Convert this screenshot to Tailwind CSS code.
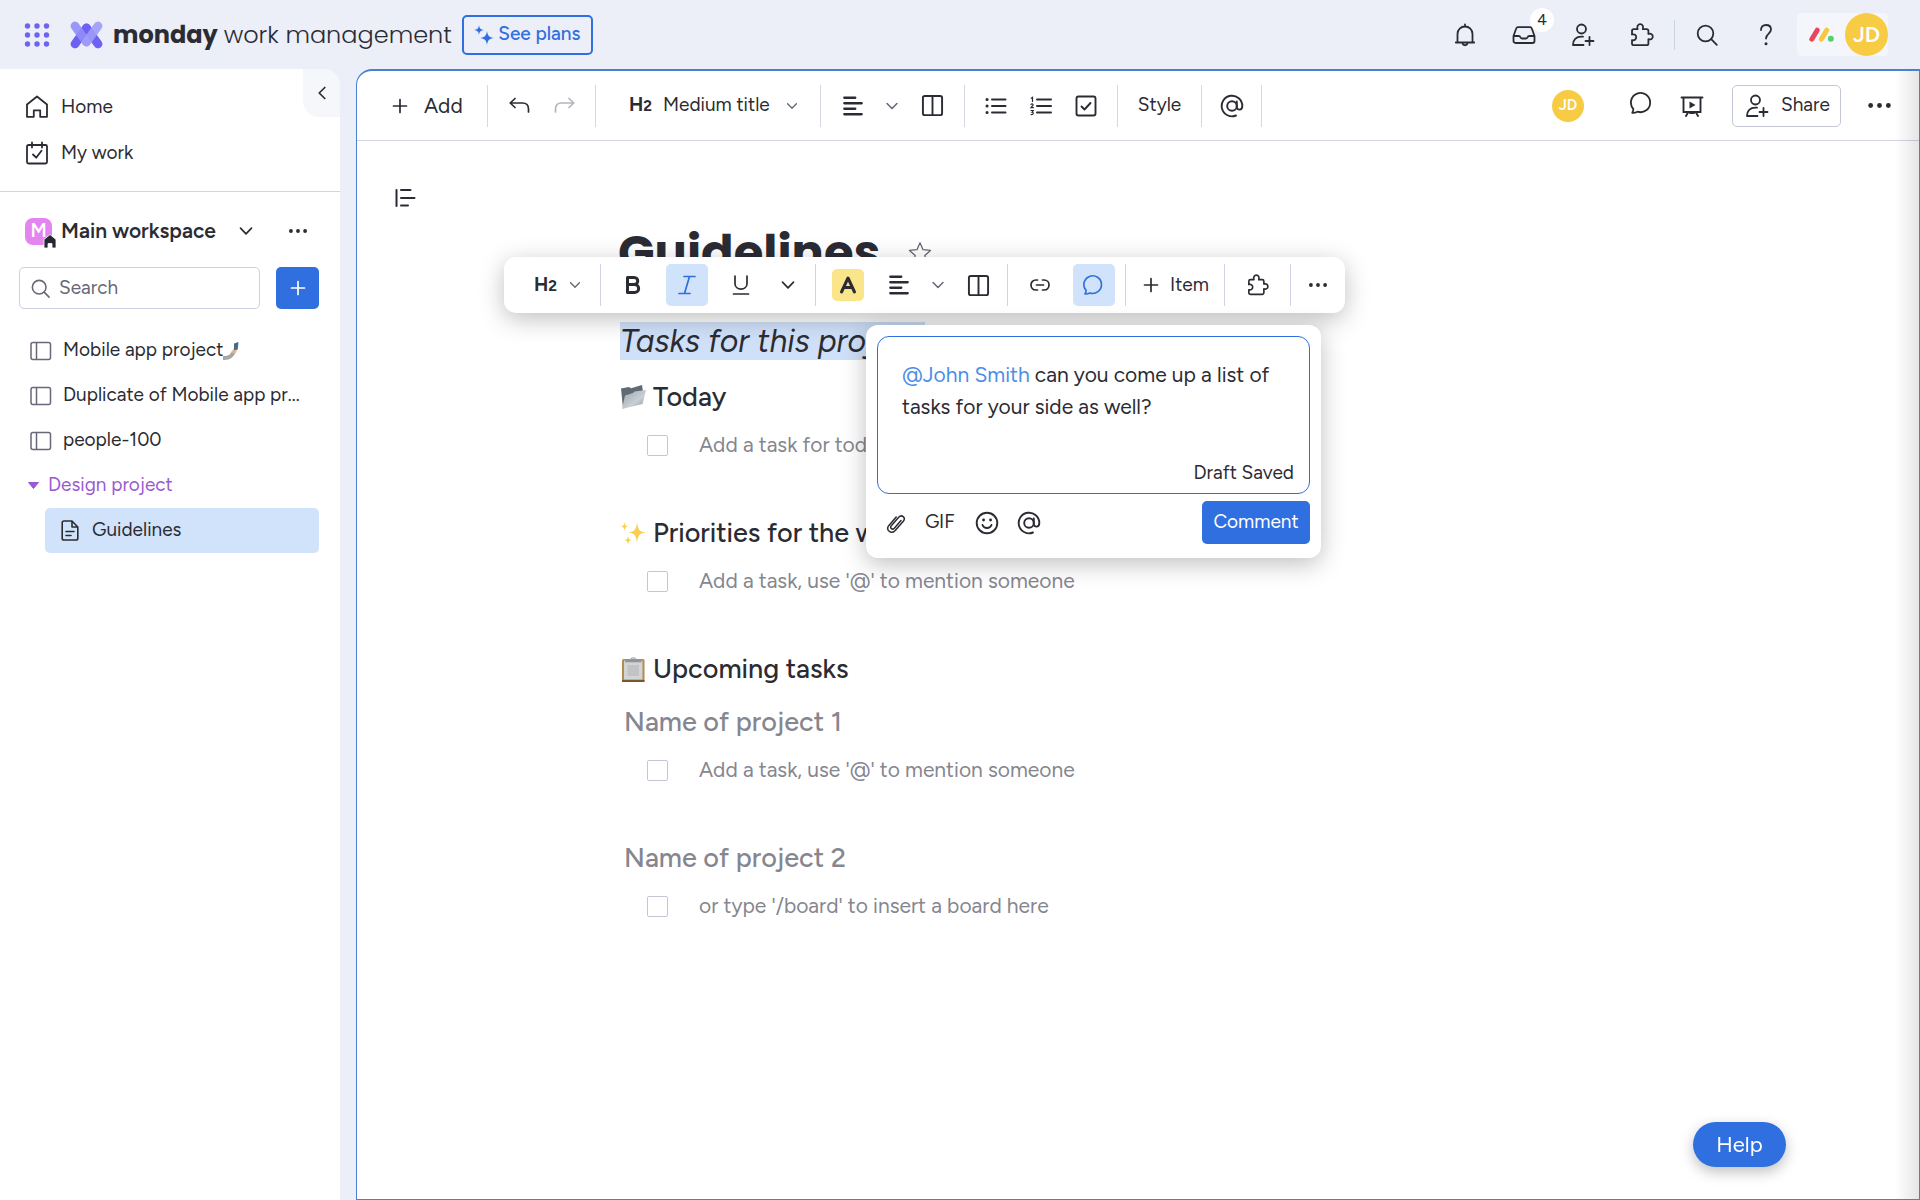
<!DOCTYPE html>
<html lang="en">
<head>
<meta charset="utf-8">
<meta name="viewport" content="width=device-width, initial-scale=1">
<title>Guidelines</title>
<script src="https://cdn.jsdelivr.net/npm/@tailwindcss/browser@4"></script>
</head>
<body class="flex min-h-screen flex-col bg-[#eceef8] font-[Figtree,Inter,sans-serif] text-[19px] text-[#2b2c33]">

<svg class="hidden" aria-hidden="true">
  <defs>
    <symbol id="plus" viewBox="0 0 20 20"><path d="M10 3.500v13M3.500 10h13" fill="none" stroke="currentColor" stroke-width="1.700" stroke-linecap="round"/></symbol>
    <symbol id="chevron" viewBox="0 0 20 20"><path d="M4.500 7.200 10 12.800l5.500-5.600" fill="none" stroke="currentColor" stroke-width="1.700" stroke-linecap="round" stroke-linejoin="round"/></symbol>
    <symbol id="dots" viewBox="0 0 24 24"><g fill="currentColor"><circle cx="3.500" cy="12" r="2.300"/><circle cx="12" cy="12" r="2.300"/><circle cx="20.500" cy="12" r="2.300"/></g></symbol>
    <symbol id="search" viewBox="0 0 24 24"><g fill="none" stroke="currentColor" stroke-width="1.800" stroke-linecap="round"><circle cx="10.500" cy="10.500" r="7.800"/><path d="m16.200 16.200 5.600 5.600"/></g></symbol>
    <symbol id="person" viewBox="0 0 24 24"><g fill="none" stroke="currentColor" stroke-width="1.800" stroke-linecap="round" stroke-linejoin="round"><circle cx="10.500" cy="6" r="4.500"/><path d="M12.500 22H2c0-5.500 3-8.300 8.500-8.300h1.500M18.500 14v8M14.500 18h8"/></g></symbol>
    <symbol id="puzzle" viewBox="0 0 24 24"><path d="M2 8C2 6.800 2.700 6.200 3.800 6.200H7.600C6.600 3.500 8 1.200 10.200 1.200s3.600 2.300 2.600 5h3.800c1.100 0 1.800.6 1.800 1.800v3c2.500-.9 4.400.5 4.400 2.600s-1.900 3.400-4.400 2.600v4.200c0 1.200-.7 1.800-1.800 1.800H3.800C2.700 22.200 2 21.600 2 20.400v-3.200c2.400.6 4.200-.8 4.200-2.900S4.400 10.800 2 11.500Z" fill="none" stroke="currentColor" stroke-width="1.800" stroke-linejoin="round"/></symbol>
    <symbol id="chat" viewBox="0 0 24 24"><path d="M2.200 21.800c.9-1.700 1.200-2.800 1.100-3.900A9.600 9.600 0 1 1 7.500 20.700c-1.700.9-3.300 1.200-5.300 1.100Z" fill="none" stroke="currentColor" stroke-width="1.800" stroke-linejoin="round"/></symbol>
    <symbol id="at" viewBox="0 0 24 24"><g fill="none" stroke="currentColor" stroke-width="1.900" stroke-linecap="round"><circle cx="12" cy="12" r="4.800"/><path d="M16.800 7.500V13c0 3.700 5.500 3.700 5.500-1A10.300 10.300 0 1 0 16 21.500"/></g></symbol>
    <symbol id="align" viewBox="0 0 24 24"><path d="M2.500 3h12M2.500 9h19M2.500 15h12M2.500 21h19" fill="none" stroke="currentColor" stroke-width="2.500" stroke-linecap="round"/></symbol>
    <symbol id="columns" viewBox="0 0 24 24"><g fill="none" stroke="currentColor" stroke-width="2"><rect x="2" y="2" width="20" height="20" rx="2"/><path d="M12 2v20"/></g></symbol>
    <symbol id="board" viewBox="0 0 22 20"><g fill="none" stroke="#676879" stroke-width="1.500"><rect x="1" y="1.500" width="19.500" height="17" rx="2"/><path d="M6.500 2v16"/></g></symbol>
  </defs>
</svg>

<header class="flex h-[69px] shrink-0 items-center pl-6 pr-8">
  <button aria-label="Apps" class="text-[#6c63f0]">
    <svg class="h-[26px] w-[26px]" viewBox="0 0 26 26" fill="currentColor"><circle cx="3.500" cy="4" r="2.700"/><circle cx="13" cy="4" r="2.700"/><circle cx="22.500" cy="4" r="2.700"/><circle cx="3.500" cy="13" r="2.700"/><circle cx="13" cy="13" r="2.700"/><circle cx="22.500" cy="13" r="2.700"/><circle cx="3.500" cy="22" r="2.700"/><circle cx="13" cy="22" r="2.700"/><circle cx="22.500" cy="22" r="2.700"/></svg>
  </button>
  <a href="#" class="ml-5 flex items-center">
    <svg class="h-[28px] w-[33px]" viewBox="0 0 33 28" fill="none" stroke-linecap="round" stroke-width="8.800"><path d="M16.500 7 5 23" stroke="#6c61f2"/><path d="M16.500 7 28 23" stroke="#6c61f2"/><path d="M5 5 16.500 21" stroke="#928df8" stroke-opacity=".9"/><path d="M28 5 16.500 21" stroke="#9f9bfa" stroke-opacity=".9"/></svg>
    <span class="ml-[10px] font-[Poppins,Figtree,Inter,sans-serif] text-2xl font-bold leading-8">monday</span>
    <span class="ml-[6px] font-[Poppins,Figtree,Inter,sans-serif] text-2xl font-light leading-8">work management</span>
  </a>
  <button class="ml-[10px] flex h-10 w-[131px] items-center justify-center gap-1 rounded-[5px] border-2 border-[#2f6fdf] font-medium text-[#2f6fdf]">
    <svg class="h-5 w-5" viewBox="0 0 20 20" fill="currentColor"><path d="M5 0c.5 3.500 1.500 4.500 5 5-3.500.5-4.500 1.500-5 5C4.500 6.500 3.500 5.500 0 5 3.500 4.500 4.500 3.500 5 0ZM13 6c.8 5 2 6.200 7 7-5 .8-6.200 2-7 7-.8-5-2-6.200-7-7 5-.8 6.200-2 7-7Z"/></svg>
    See plans
  </button>
  <nav class="ml-auto flex items-center">
    <button aria-label="Notifications" class="flex w-[59px] justify-center">
      <svg class="h-6 w-6" viewBox="0 0 24 24" fill="none" stroke="currentColor" stroke-width="1.800" stroke-linecap="round" stroke-linejoin="round"><path d="M4.500 19.500V11a7.500 7.500 0 0 1 15 0v8.500M2.800 19.500h18.400M12 1.500v2M9.500 20c.3 3 4.700 3 5 0"/></svg>
    </button>
    <button aria-label="Inbox" class="relative flex w-[59px] justify-center">
      <svg class="h-6 w-6" viewBox="0 0 24 24" fill="none" stroke="currentColor" stroke-width="1.800" stroke-linejoin="round"><path d="M1.500 13 4.200 5.500C4.500 4.600 5 4.200 6 4.200h12c1 0 1.500.4 1.800 1.300L22.500 13v5c0 1.200-.8 2-2 2h-17c-1.200 0-2-.8-2-2ZM1.500 13h5.200c1 0 1.400.5 1.700 1.300.3.900.7 1.200 1.600 1.200h4c.9 0 1.300-.3 1.600-1.200.3-.8.700-1.300 1.700-1.300h5.200"/></svg>
      <span class="absolute -top-[15px] left-9 flex h-6 w-6 items-center justify-center rounded-full bg-white text-base">4</span>
    </button>
    <button aria-label="Invite members" class="flex w-[59px] justify-center"><svg class="h-6 w-6"><use href="#person"/></svg></button>
    <button aria-label="Marketplace" class="flex w-[59px] justify-center"><svg class="h-6 w-6"><use href="#puzzle"/></svg></button>
    <span class="ml-[3px] h-[30px] w-px bg-[#cdd3e2]"></span>
    <button aria-label="Search everything" class="ml-[2px] flex w-[59px] justify-center"><svg class="h-6 w-6"><use href="#search"/></svg></button>
    <button aria-label="Help center" class="flex w-[59px] justify-center">
      <svg class="h-6 w-6" viewBox="0 0 24 24"><path d="M7 7c0-3.300 2-5 5-5s5 1.800 5 4.500c0 4-5 4.200-5 9" fill="none" stroke="currentColor" stroke-width="1.800" stroke-linecap="round"/><circle cx="12" cy="20.800" r="1.500" fill="currentColor"/></svg>
    </button>
    <button aria-label="Account" class="ml-[2px] flex h-[43px] items-center rounded bg-[#f5f6fc] pl-3">
      <svg class="mr-[11px] h-[15px] w-[25px]" viewBox="0 0 25 15" stroke-linecap="round" stroke-width="5"><path d="m2.800 12.200 5.400-9" stroke="#e8475b"/><path d="m12.300 12.200 5.400-9" stroke="#f8c73d"/><circle cx="21.800" cy="11.800" r="3" fill="#56cf6d"/></svg>
      <span class="flex h-[43px] w-[43px] items-center justify-center rounded-full bg-[#f7cb43] text-[22px] font-semibold text-white">JD</span>
    </button>
  </nav>
</header>

<div class="flex flex-1">
  <aside class="relative w-[340px] shrink-0 rounded-tr-2xl bg-white">
    <button aria-label="Collapse sidebar" class="absolute right-0 top-0 flex h-12 w-[37px] items-center justify-center rounded-bl-2xl rounded-tr-2xl bg-[#f6f7fb]">
      <svg class="h-5 w-5 rotate-90"><use href="#chevron"/></svg>
    </button>
    <nav class="border-b border-[#d0d4e4] pb-[15px] pl-[25px] pt-[15px]">
      <a href="#" class="flex h-[46px] items-center gap-3">
        <svg class="h-6 w-6" viewBox="0 0 24 24" fill="none" stroke="currentColor" stroke-width="1.800" stroke-linejoin="round"><path d="M2 9.500 12 1.500l10 8v12.300h-6.800v-6.500H8.800v6.500H2Z"/></svg>Home</a>
      <a href="#" class="flex h-[46px] items-center gap-3">
        <svg class="h-6 w-6" viewBox="0 0 24 24" fill="none" stroke="currentColor" stroke-width="1.800" stroke-linecap="round" stroke-linejoin="round"><rect x="2" y="4" width="20" height="18.500" rx="1.500"/><path d="M7 1.500v5M17 1.500v5M8 13.500l3.200 3.200 5.300-7"/></svg>My work</a>
    </nav>
    <div class="flex h-[75px] items-center pl-[25px] pt-[3px]">
      <span class="relative flex h-[27px] w-[27px] items-center justify-center rounded-lg bg-[#e484f0] font-semibold text-white">M
        <svg class="absolute -bottom-1 -right-[5px] h-4 w-[14px]" viewBox="0 0 14 16"><path d="M1 6.500 7 1.500l6 5V15H9v-4.500H5V15H1Z" fill="#26282f" stroke="#fff" stroke-width=".8"/></svg>
      </span>
      <button class="ml-[9px] flex items-center text-[21px] font-semibold">Main workspace<svg class="ml-5 h-5 w-5"><use href="#chevron"/></svg></button>
      <button aria-label="Workspace options" class="ml-auto mr-8"><svg class="h-5 w-5"><use href="#dots"/></svg></button>
    </div>
    <div class="flex gap-4 pl-[19px] pr-[21px]">
      <label class="flex h-[42px] flex-1 items-center gap-2 rounded-[5px] border border-[#cbd0e2] pl-[10px] text-[#676879]">
        <svg class="h-[21px] w-[21px] shrink-0"><use href="#search"/></svg>
        <input type="text" aria-label="Search" placeholder="Search" class="w-full min-w-0 bg-transparent outline-none placeholder:text-[#676879]">
      </label>
      <button aria-label="Add item" class="flex h-[42px] w-[43px] items-center justify-center rounded-[5px] bg-[#2f6fdf] text-white"><svg class="h-5 w-5"><use href="#plus"/></svg></button>
    </div>
    <nav class="pl-[30px] pr-[21px] pt-[19px]">
      <a href="#" class="flex h-[45px] items-center gap-[11px]"><svg class="h-5 w-[22px] shrink-0"><use href="#board"/></svg><span class="flex items-center">Mobile app project<svg class="h-[18px] w-[17px]" viewBox="0 0 17 18"><path d="M0 14c4 .5 7-.5 9-5l3 2.500C9.500 17 5 18 0 18Z" fill="#a7a7a5"/><path d="m8.500 10 3-4.500 3 1.500-2.500 5.500Z" fill="#e2b48c"/><path d="m11 1.500 4.500-1.500-.8 7.500-3.700.5Z" fill="#47698c"/></svg></span></a>
      <a href="#" class="flex h-[45px] items-center gap-[11px]"><svg class="h-5 w-[22px] shrink-0"><use href="#board"/></svg><span>Duplicate of Mobile app pr...</span></a>
      <a href="#" class="flex h-[45px] items-center gap-[11px]"><svg class="h-5 w-[22px] shrink-0"><use href="#board"/></svg>people-100</a>
      <button class="-ml-[2px] flex h-[45px] items-center gap-[9px] text-[#9a5bd2]"><svg class="h-[7px] w-[11px]" viewBox="0 0 11 7"><path d="M.5.500h10L5.500 6.500Z" fill="currentColor" stroke="currentColor" stroke-linejoin="round"/></svg>Design project</button>
      <a href="#" class="ml-[15px] flex h-[45px] items-center gap-[13px] rounded-[5px] bg-[#d1e2fb] pl-4">
        <svg class="h-[21px] w-[18px]" viewBox="0 0 18 21" fill="none" stroke="currentColor" stroke-width="1.600" stroke-linecap="round" stroke-linejoin="round"><path d="M11 1H3C1.900 1 1.200 1.700 1.200 2.800v15.400c0 1.100.7 1.800 1.800 1.800h12c1.100 0 1.800-.7 1.800-1.800V7Zm0 0v6h5.800M5 11.500h8M5 15.500h5"/></svg>Guidelines</a>
    </nav>
  </aside>

  <main class="relative ml-4 flex min-w-0 flex-1 flex-col rounded-tl-2xl border border-t-2 border-[#4a7fd2] bg-white">
    <div class="pointer-events-none absolute inset-y-0 right-0 w-6 bg-linear-to-l from-black/10 to-transparent"></div>
    <div class="flex h-[70px] shrink-0 items-center border-b border-[#d0d4e4]">
      <button class="flex h-[42px] w-[131px] items-center gap-[14px] border-r border-[#d4d7e4] pl-[33px] text-[21px]"><svg class="h-5 w-5"><use href="#plus"/></svg>Add</button>
      <div class="flex h-[42px] w-[108px] items-center justify-center gap-6 border-r border-[#d4d7e4]">
        <button aria-label="Undo"><svg class="h-[18px] w-[21px]" viewBox="0 0 21 18" fill="none" stroke="currentColor" stroke-width="1.700" stroke-linecap="round" stroke-linejoin="round"><path d="M6 1.500 1.200 6 6 10.500M1.500 6h12c4 0 6 2.500 6 6v3"/></svg></button>
        <button aria-label="Redo" class="text-[#b5b6bd]"><svg class="h-[18px] w-[21px] -scale-x-100" viewBox="0 0 21 18" fill="none" stroke="currentColor" stroke-width="1.700" stroke-linecap="round" stroke-linejoin="round"><path d="M6 1.500 1.200 6 6 10.500M1.500 6h12c4 0 6 2.500 6 6v3"/></svg></button>
      </div>
      <button class="flex h-[42px] w-[225px] items-center border-r border-[#d4d7e4] pl-[33px]"><b class="font-bold">H<span class="text-[15px]">2</span></b><span class="ml-[11px]">Medium title</span><svg class="ml-auto mr-5 h-4 w-4 text-[#676879]"><use href="#chevron"/></svg></button>
      <div class="flex h-[42px] w-[144px] items-center border-r border-[#d4d7e4] pl-5">
        <button aria-label="Align"><svg class="h-[22px] w-6"><use href="#align"/></svg></button>
        <button aria-label="Align options" class="ml-[18px] text-[#676879]"><svg class="h-[18px] w-[18px]"><use href="#chevron"/></svg></button>
        <button aria-label="Columns" class="ml-5"><svg class="h-[23px] w-[23px]"><use href="#columns"/></svg></button>
      </div>
      <div class="flex h-[42px] w-[153px] items-center justify-center gap-[21px] border-r border-[#d4d7e4]">
        <button aria-label="Bulleted list"><svg class="h-6 w-6" viewBox="0 0 24 24" fill="none" stroke="currentColor" stroke-width="2" stroke-linecap="round"><path d="M8 5.500h13.500M8 12h13.500M8 18.500h13.500"/><path d="M3 5.500h.1M3 12h.1M3 18.500h.1" stroke-width="3"/></svg></button>
        <button aria-label="Numbered list"><svg class="h-6 w-6" viewBox="0 0 24 24" fill="none" stroke="currentColor" stroke-width="2" stroke-linecap="round"><path d="M8 5.500h14M8 12h14M8 18.500h14"/><path d="m2.200 4.200 1.300-.8v4M2 10.300c1-1 2.500-.3 2 .9L2 13.600h2.400M2 16.500h2.300l-1.300 1.700c1.800 0 1.800 2.600-1 2.300" stroke-width="1.200"/></svg></button>
        <button aria-label="Checklist"><svg class="h-6 w-6" viewBox="0 0 24 24" fill="none" stroke="currentColor" stroke-width="1.900" stroke-linecap="round" stroke-linejoin="round"><rect x="2.500" y="2.500" width="19" height="19" rx="2"/><path d="m7.500 12.500 3 3 6-6.500"/></svg></button>
      </div>
      <button class="h-[42px] w-[84px] border-r border-[#d4d7e4]">Style</button>
      <button aria-label="Mention" class="flex h-[42px] w-[60px] items-center justify-center border-r border-[#d4d7e4]"><svg class="h-6 w-6"><use href="#at"/></svg></button>
      <div class="ml-auto flex items-center pr-[27px]">
        <span class="flex h-8 w-8 items-center justify-center rounded-full bg-[#f7cb43] text-[15px] font-semibold text-white">JD</span>
        <button aria-label="Comments" class="mb-[6px] ml-[46px]"><svg class="h-6 w-6"><use href="#chat"/></svg></button>
        <button aria-label="Present" class="ml-[26px]"><svg class="h-6 w-6" viewBox="0 0 24 24" fill="none" stroke="currentColor" stroke-width="1.900" stroke-linecap="round"><path d="M1.500 3.500h21M3.500 4v14h17V4M8 18.500l-2 3.500M16 18.500l2 3.500M10 19h4"/><path d="m9.500 7.500 6 3.500-6 3.500Z" fill="currentColor" stroke="none"/></svg></button>
        <button class="ml-7 flex h-[42px] w-[109px] items-center gap-3 rounded-[5px] border border-[#c3c6d4] pl-3"><svg class="h-6 w-6"><use href="#person"/></svg>Share</button>
        <button aria-label="More" class="ml-[26px]"><svg class="h-[25px] w-[25px]"><use href="#dots"/></svg></button>
      </div>
    </div>

    <div class="relative flex-1 pb-20 pt-[82px]">
      <button aria-label="Table of contents" class="absolute left-[37px] top-[45px]"><svg class="h-6 w-6" viewBox="0 0 24 24" fill="none" stroke="currentColor" stroke-width="2" stroke-linecap="round"><path d="M2.500 4v16M7 4h9.500M7 12h13.500M7 19.500h7"/></svg></button>

      <article class="relative mx-auto w-full max-w-[1040px] text-[21px]">
        <div class="flex h-[60px] items-center gap-7">
          <h1 class="font-[Poppins,Figtree,Inter,sans-serif] text-5xl font-bold leading-[60px]">Guidelines</h1>
          <button aria-label="Favorite"><svg class="h-6 w-6" viewBox="0 0 24 24" fill="none" stroke="#676879" stroke-width="1.300" stroke-linejoin="round"><path d="m12 1.800 3 6.900 7.500.7-5.700 5 1.700 7.400L12 17.900l-6.500 3.900 1.700-7.400-5.700-5 7.500-.7Z"/></svg></button>
        </div>
        <h2 class="ml-[2px] mt-[39px] h-[38px] w-fit bg-[#cfe0f8] pr-[3px] text-[32px] italic leading-[38px]">Tasks for this project</h2>

        <h3 class="mt-[21px] flex h-8 items-center gap-[7px] text-[27px] font-medium">
          <svg class="ml-[3px] h-6 w-[25px]" viewBox="0 0 25 24"><defs><linearGradient id="fold" x1="0" y1="0" x2="1" y2="1"><stop offset="0" stop-color="#9aa5ae"/><stop offset=".6" stop-color="#c8d0d6"/><stop offset="1" stop-color="#808d97"/></linearGradient></defs><path d="M0 3.500 8 2l2 1.300L21 0l1 7-20 16.500Z" fill="#5f6a72"/><path d="m4 10.500 8-2.500 1.500-1.500L25 5l-3.500 14L1 24Z" fill="url(#fold)"/></svg>Today</h3>
        <label class="mt-4 flex h-8 items-center gap-[31px] pl-[29px] text-[#85868f]"><input type="checkbox" class="h-[21px] w-[21px] appearance-none rounded-[2px] border border-[#c3c6d4] bg-white">Add a task for today</label>

        <h3 class="mt-14 flex h-8 items-center gap-[7px] text-[27px] font-medium">
          <svg class="ml-[3px] h-6 w-[25px]" viewBox="0 0 25 24" fill="#f9cf52"><path d="M16 1c1 7.500 2 9.500 8.500 10.500C18 12.500 17 14.500 16 22c-1-7.500-2-9.500-8.500-10.500C14 10.500 15 8.500 16 1ZM3.500 1c.5 3.200 1 4 3.500 4.500C4.500 6 4 6.800 3.500 10 3 6.800 2.500 6 0 5.500 2.500 5 3 4.200 3.500 1ZM7 14.500c.5 3.500 1 4.200 3.500 4.700C8 19.700 7.500 20.500 7 24c-.5-3.500-1-4.300-3.500-4.800C6 18.700 6.500 18 7 14.500Z"/></svg>Priorities for the week</h3>
        <label class="mt-4 flex h-8 items-center gap-[31px] pl-[29px] text-[#85868f]"><input type="checkbox" class="h-[21px] w-[21px] appearance-none rounded-[2px] border border-[#c3c6d4] bg-white">Add a task, use '@' to mention someone</label>

        <h3 class="mt-14 flex h-8 items-center gap-[7px] text-[27px] font-medium">
          <svg class="ml-[3px] h-[27px] w-[25px]" viewBox="0 0 25 27"><rect x="1" y="3" width="22.500" height="23" rx="1.500" fill="#b58a4e"/><path d="M1 25h22.500" stroke="#79572a" stroke-width="2"/><path d="M3 4.500h18.500v19H3Z" fill="#d3d4d5"/><path d="M6.500 9h11.500v11H6.500Z" fill="#c2c3c5"/><path d="M4 3.500h16.500v2.800H4Z" fill="#8f969a"/><path d="M9.500 3.500a3 2.700 0 0 1 5.500 0" fill="none" stroke="#a4a9ab" stroke-width="1.300"/></svg>Upcoming tasks</h3>
        <h3 class="mt-[21px] flex h-8 items-center pl-[6px] text-[27px] font-medium text-[#85868f]">Name of project 1</h3>
        <label class="mt-4 flex h-8 items-center gap-[31px] pl-[29px] text-[#85868f]"><input type="checkbox" class="h-[21px] w-[21px] appearance-none rounded-[2px] border border-[#c3c6d4] bg-white">Add a task, use '@' to mention someone</label>
        <h3 class="mt-14 flex h-8 items-center pl-[6px] text-[27px] font-medium text-[#85868f]">Name of project 2</h3>
        <label class="mt-4 flex h-8 items-center gap-[31px] pl-[29px] text-[#85868f]"><input type="checkbox" class="h-[21px] w-[21px] appearance-none rounded-[2px] border border-[#c3c6d4] bg-white">or type '/board' to insert a board here</label>

        <!-- Selection toolbar -->
        <div role="toolbar" aria-label="Text formatting" class="absolute -left-[114px] top-[34px] flex h-14 w-[841px] items-center rounded-xl bg-white text-[19px] shadow-[0_6px_24px_rgba(0,0,0,0.25)]">
          <button class="flex h-[42px] w-[97px] items-center gap-[10px] border-r border-[#d0d4e4] pl-[30px]"><b class="font-bold">H<span class="text-[15px]">2</span></b><svg class="h-4 w-4 text-[#676879]"><use href="#chevron"/></svg></button>
          <div class="flex h-[42px] w-[215px] items-center border-r border-[#d0d4e4] pl-[11px]">
            <button aria-label="Bold" class="flex h-[42px] w-[42px] items-center justify-center"><svg class="h-5 w-5" viewBox="0 0 20 20" fill="none" stroke="currentColor" stroke-width="3" stroke-linejoin="round"><path d="M4.500 2.500h6.500c5 0 5 7 0 7H4.500ZM4.500 9.500h7c5.500 0 5.500 8 0 8h-7Z"/></svg></button>
            <button aria-label="Italic" class="ml-3 flex h-[42px] w-[42px] items-center justify-center rounded-[5px] bg-[#d1e2fb] text-[#2f6fdf]"><svg class="h-5 w-5" viewBox="0 0 20 20" fill="none" stroke="currentColor" stroke-width="1.700" stroke-linecap="round"><path d="M7 1.500h11M2 18.500h11M12.500 1.500l-5 17"/></svg></button>
            <button aria-label="Underline" class="ml-3 flex h-[42px] w-[42px] items-center justify-center"><svg class="h-5 w-5" viewBox="0 0 20 20" fill="none" stroke="currentColor" stroke-width="1.700" stroke-linecap="round"><path d="M4 1v7.500c0 7.500 12 7.500 12 0V1M2.500 19h15"/></svg></button>
            <button aria-label="More styles" class="ml-4"><svg class="h-5 w-5"><use href="#chevron"/></svg></button>
          </div>
          <div class="flex h-[42px] w-[192px] items-center border-r border-[#d0d4e4] pl-4">
            <button aria-label="Text color" class="flex h-8 w-8 items-center justify-center rounded-[5px] bg-[#fae58a]"><svg class="h-5 w-5" viewBox="0 0 20 20" fill="none" stroke="currentColor" stroke-width="3" stroke-linecap="round" stroke-linejoin="round"><path d="m3.500 17 6.500-14 6.500 14M6 12.500h8"/></svg></button>
            <button aria-label="Align" class="ml-[23px]"><svg class="h-[22px] w-6"><use href="#align"/></svg></button>
            <button aria-label="Align options" class="ml-[18px] text-[#676879]"><svg class="h-[18px] w-[18px]"><use href="#chevron"/></svg></button>
            <button aria-label="Columns" class="ml-5"><svg class="h-[23px] w-[23px]"><use href="#columns"/></svg></button>
          </div>
          <div class="flex h-[42px] w-[118px] items-center border-r border-[#d0d4e4] pl-[22px]">
            <button aria-label="Link"><svg class="h-5 w-5" viewBox="0 0 20 20" fill="none" stroke="currentColor" stroke-width="1.700" stroke-linecap="round"><path d="M7.500 5H6C-.7 5-.7 15 6 15h1.500M12.500 5H14c6.700 0 6.700 10 0 10h-1.500M6.500 10h7"/></svg></button>
            <button aria-label="Comment on selection" class="ml-[23px] flex h-[42px] w-[42px] items-center justify-center rounded-[5px] bg-[#d1e2fb] text-[#2f6fdf]"><svg class="h-[22px] w-[22px]"><use href="#chat"/></svg></button>
          </div>
          <button class="flex h-[42px] w-[99px] items-center justify-center gap-[9px] border-r border-[#d0d4e4]"><svg class="h-5 w-5"><use href="#plus"/></svg>Item</button>
          <button aria-label="Apps" class="flex h-[42px] w-[66px] items-center justify-center border-r border-[#d0d4e4]"><svg class="h-[22px] w-[22px]"><use href="#puzzle"/></svg></button>
          <button aria-label="More" class="flex flex-1 justify-center"><svg class="h-5 w-5"><use href="#dots"/></svg></button>
        </div>

        <!-- Comment box -->
        <form class="absolute left-[248px] top-[102px] w-[455px] rounded-xl bg-white px-[11px] pb-[14px] pt-[11px] text-[19px] shadow-[0_6px_24px_rgba(0,0,0,0.25)]">
          <div class="flex h-[158px] flex-col justify-between rounded-xl border border-[#2f6fdf] pb-2 pl-6 pr-[15px] pt-[22px]">
            <div role="textbox" aria-multiline="true" aria-label="Comment" contenteditable="true" class="text-[21px] leading-8 outline-none"><span class="text-[#4b8ee8]">@John Smith</span> can you come up a list of<br>tasks for your side as well?</div>
            <p class="text-right leading-6">Draft Saved</p>
          </div>
          <div class="mt-[7px] flex h-[43px] items-center">
            <button type="button" aria-label="Attach" class="ml-2"><svg class="h-[22px] w-[22px]" viewBox="0 0 22 22" fill="none" stroke="currentColor" stroke-width="1.500" stroke-linecap="round"><path d="m16 8.500-6.700 7.700c-2 2.200-4.800-.2-3-2.400l7.400-8.500c3-3.300 7.500.4 4.600 3.900l-8.100 9.200c-4.200 4.500-9.800-.5-6.300-5L11.200 5"/></svg></button>
            <button type="button" class="ml-[18px]">GIF</button>
            <button type="button" aria-label="Emoji" class="ml-5"><svg class="h-6 w-6" viewBox="0 0 24 24" fill="none" stroke="currentColor" stroke-width="1.900" stroke-linecap="round"><circle cx="12" cy="12" r="10.300"/><path d="M7.500 14c1.500 4 7.500 4 9 0"/><path d="M8.500 9h.1M15.500 9h.1" stroke-width="2.800"/></svg></button>
            <button type="button" aria-label="Mention someone" class="ml-[18px]"><svg class="h-6 w-6"><use href="#at"/></svg></button>
            <button type="button" class="ml-auto h-[43px] w-[108px] rounded-[5px] bg-[#2f6fdf] text-white">Comment</button>
          </div>
        </form>
      </article>
    </div>
  </main>
</div>

<button class="fixed bottom-[33px] right-[134px] h-[45px] w-[93px] rounded-full bg-[#2f6fdf] text-[22px] text-white shadow-[0_5px_14px_rgba(0,0,0,0.25)]">Help</button>
</body>
</html>
